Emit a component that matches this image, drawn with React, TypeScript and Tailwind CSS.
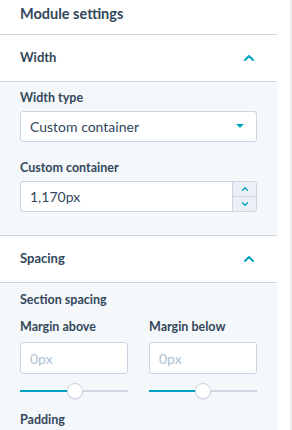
import { ChevronDown, ChevronUp } from "lucide-react";

const font = { fontFamily: 'Lato, "Noto Sans", sans-serif' };

function SectionHeader({ title }: { title: string }) {
  return (
    <div className="flex h-[47px] items-center justify-between border-b border-[#cbd6e2] pl-5 pr-[20px]">
      <span className="text-[13px] font-bold text-[#33475b]">{title}</span>
      <ChevronUp className="h-4 w-4 text-[#00a4bd]" strokeWidth={3} />
    </div>
  );
}

function Slider({ value }: { value: number }) {
  return (
    <div className="relative mt-[9px] h-4 w-[108px]">
      <div className="absolute left-0 right-0 top-[7px] h-[2px] bg-[#cbd6e2]" />
      <div
        className="absolute left-0 top-[7px] h-[2px] bg-[#00a4bd]"
        style={{ width: value }}
      />
      <div
        className="absolute top-0 h-4 w-4 -translate-x-1/2 rounded-full border border-[#cbd6e2] bg-white shadow-[0_1px_2px_rgba(0,0,0,0.08)]"
        style={{ left: value }}
      />
    </div>
  );
}

export default function App() {
  return (
    <div className="flex h-[430px] w-[292px] overflow-hidden bg-white" style={font}>
      <div className="w-[277px] overflow-hidden">
        {/* Title */}
        <div className="flex h-[35px] items-center border-b border-[#cbd6e2] pb-[7px] pl-5">
          <span className="text-[14.5px] font-bold text-[#33475b]">Module settings</span>
        </div>

        <SectionHeader title="Width" />

        <div className="border-b border-[#cbd6e2] bg-[#f5f8fa] px-5 pb-[23px] pt-[7px]">
          <label className="block text-[12.5px] font-bold text-[#33475b]">Width type</label>
          <div className="mt-[3px] flex h-[31px] w-[237px] items-center justify-between rounded-[3px] border border-[#cbd6e2] bg-white pl-[9px] pr-[12px]">
            <span className="text-[14px] text-[#33475b]">Custom container</span>
            <span className="h-0 w-0 border-x-[4px] border-t-[4px] border-x-transparent border-t-[#00a4bd]" />
          </div>

          <label className="mt-[17px] block text-[12.5px] font-bold text-[#33475b]">
            Custom container
          </label>
          <div className="mt-[3px] flex h-[31px] w-[237px] overflow-hidden rounded-[3px] border border-[#cbd6e2] bg-white">
            <div className="flex flex-1 items-center pl-[9px] text-[14px] text-[#33475b]">1,170px</div>
            <div className="flex w-[24px] flex-col border-l border-[#cbd6e2] bg-[#eaf0f6]">
              <div className="flex flex-1 items-center justify-center border-b border-[#cbd6e2]">
                <ChevronUp className="h-[10px] w-[10px] text-[#00a4bd]" strokeWidth={3} />
              </div>
              <div className="flex flex-1 items-center justify-center">
                <ChevronDown className="h-[10px] w-[10px] text-[#00a4bd]" strokeWidth={3} />
              </div>
            </div>
          </div>
        </div>

        <SectionHeader title="Spacing" />

        <div className="bg-[#f5f8fa] px-5 pt-[8px]">
          <div className="text-[12.5px] font-bold text-[#33475b]">Section spacing</div>
          <div className="mt-[9px] grid grid-cols-[108px_108px] gap-x-[21px]">
            <div>
              <label className="block text-[12.5px] font-bold text-[#33475b]">Margin above</label>
              <div className="mt-[5px] flex h-[32px] items-center rounded-[3px] border border-[#cbd6e2] bg-white pl-[9px] text-[14px] text-[#b0c1d4]">
                0px
              </div>
              <Slider value={55} />
            </div>
            <div>
              <label className="block text-[12.5px] font-bold text-[#33475b]">Margin below</label>
              <div className="mt-[5px] flex h-[32px] items-center rounded-[3px] border border-[#cbd6e2] bg-white pl-[9px] text-[14px] text-[#b0c1d4]">
                0px
              </div>
              <Slider value={54} />
            </div>
          </div>
          <div className="mt-[12px] pb-4 text-[12.5px] font-bold text-[#33475b]">Padding</div>
        </div>
      </div>
      <div className="ml-auto h-full w-[2px] bg-[#ececec]" />
    </div>
  );
}
